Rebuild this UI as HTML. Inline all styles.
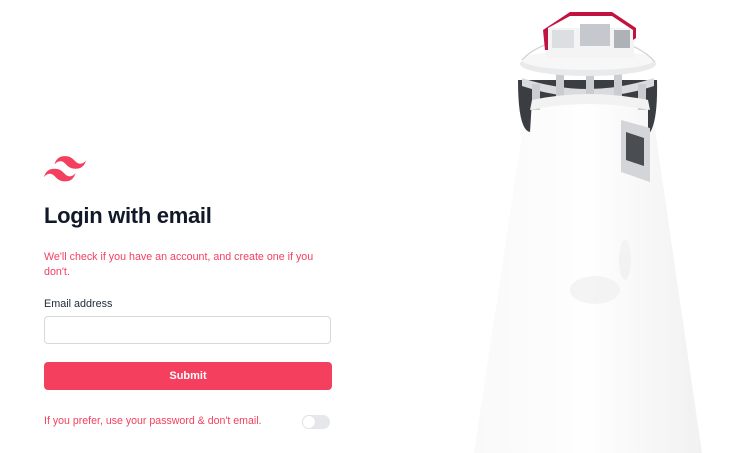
<!DOCTYPE html>
<html><head><meta charset="utf-8">
<style>
html,body{margin:0;padding:0;background:#fff;width:741px;height:453px;overflow:hidden;font-family:"Liberation Sans",sans-serif;}
.abs{position:absolute;}
h1{position:absolute;left:44px;top:203px;margin:0;font-size:22px;font-weight:bold;color:#111827;letter-spacing:-0.3px;}
.note{left:44px;top:250px;width:285px;font-size:10.7px;line-height:15px;color:#f43f5e;}
.label{left:44px;top:298px;font-size:10.8px;color:#1f2937;}
.input{left:44px;top:316px;width:285px;height:26px;border:1px solid #d6d8dd;border-radius:4px;background:#fff;}
.btn{left:44px;top:362px;width:288px;height:28px;background:#f43f5e;border-radius:4px;color:#fff;font-size:11px;font-weight:bold;text-align:center;line-height:28px;}
.pref{left:44px;top:415px;font-size:10.6px;color:#f43f5e;}
.tog{left:302px;top:415px;width:28px;height:14px;border-radius:7px;background:#e5e7eb;}
.knob{left:302px;top:415px;width:12px;height:12px;border-radius:7px;background:#fff;border:1px solid #e2e2e2;}
</style></head><body>
<svg class="abs" style="left:44px;top:156px" width="42" height="26" viewBox="0 0 54 33"><path fill="#f43f5e" d="M27 0c-7.2 0-11.7 3.6-13.5 10.8 2.7-3.6 5.850-4.95 9.45-4.05 2.054.513 3.522 2.004 5.147 3.653C30.744 13.09 33.808 16.2 40.5 16.2c7.2 0 11.7-3.6 13.5-10.8-2.7 3.6-5.85 4.95-9.45 4.05-2.054-.513-3.522-2.004-5.147-3.653C36.756 3.11 33.692 0 27 0zM13.5 16.2C6.3 16.2 1.8 19.8 0 27c2.7-3.6 5.85-4.95 9.45-4.050 2.054.514 3.522 2.004 5.147 3.653C17.244 29.29 20.308 32.4 27 32.4c7.2 0 11.7-3.6 13.5-10.8-2.7 3.6-5.85 4.95-9.45 4.05-2.054-.513-3.522-2.004-5.147-3.653C23.256 19.31 20.192 16.2 13.5 16.2z"/></svg>
<h1>Login with email</h1>
<div class="abs note">We'll check if you have an account, and create one if you don't.</div>
<div class="abs label">Email address</div>
<div class="abs input"></div>
<div class="abs btn">Submit</div>
<div class="abs pref">If you prefer, use your password &amp; don't email.</div>
<div class="abs tog"></div><div class="abs knob"></div>

<svg class="abs" style="left:0;top:0" width="741" height="453" viewBox="0 0 741 453">
<defs>
<linearGradient id="tw" x1="0" x2="1"><stop offset="0" stop-color="#f9f9f9"/><stop offset="0.5" stop-color="#fefefe"/><stop offset="1" stop-color="#f1f1f1"/></linearGradient>
</defs>
<path d="M528 95 L650 95 L702 453 L474 453 Z" fill="url(#tw)"/>
<path d="M518 80 Q518 130 530 132 L532 100 Q588 92 648 100 L648 135 Q658 125 657 80 Z" fill="#3a3d42"/>
<path d="M522 78 Q588 100 654 78 L654 86 Q588 108 522 86 Z" fill="#d9dbde"/>
<g fill="#c9ccd0">
<rect x="532" y="84" width="8" height="26"/><rect x="556" y="68" width="8" height="30"/><rect x="586" y="66" width="8" height="30"/><rect x="614" y="68" width="8" height="30"/><rect x="638" y="84" width="8" height="26"/>
</g>
<path d="M532 100 Q588 88 648 100 L650 110 Q588 98 530 110 Z" fill="#f2f2f2"/>
<ellipse cx="588" cy="64" rx="68" ry="12" fill="#e9eaec"/>
<ellipse cx="588" cy="60" rx="66" ry="10" fill="#f7f7f7"/>
<path d="M522 60 Q540 40 588 36 Q636 40 655 62" fill="none" stroke="#cfd1d4" stroke-width="1.2"/>
<rect x="546" y="28" width="88" height="30" fill="#f4f4f5"/>
<rect x="580" y="24" width="30" height="22" fill="#c5c8cc"/>
<rect x="552" y="30" width="22" height="18" fill="#dcdfe2"/>
<rect x="614" y="30" width="16" height="18" fill="#aeb1b6"/>
<path d="M543 30 L545 50 L548 50 L548 28 L570 16 L612 16 L633 30 L633 40 L636 38 L636 28 L612 12 L570 12 Z" fill="#c2123f"/>
<path d="M621 120 L650 128 L650 182 L621 172 Z" fill="#d3d5d8"/>
<path d="M626 132 L644 138 L644 166 L626 160 Z" fill="#4a4d52"/>
<g fill="#eeeeee" opacity="0.6">
<ellipse cx="625" cy="260" rx="6" ry="20"/><ellipse cx="595" cy="290" rx="25" ry="14"/>
</g>
</svg>
</body></html>
